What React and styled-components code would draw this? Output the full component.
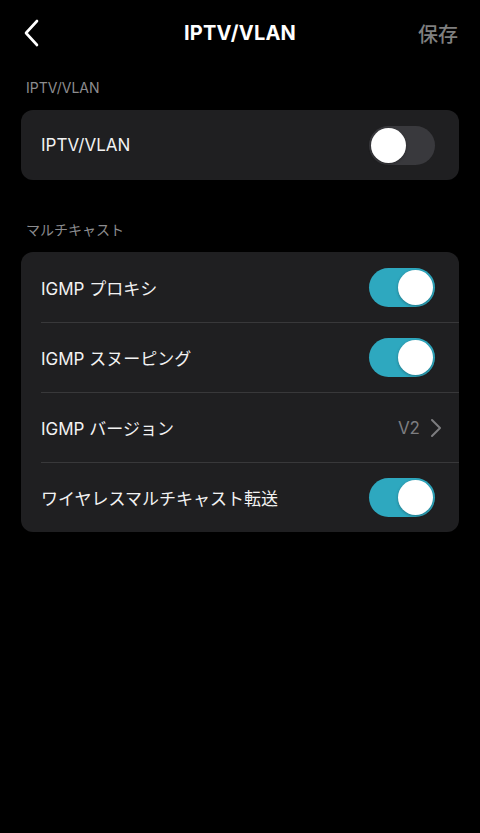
import React from "react";
import styled, { createGlobalStyle } from "styled-components";

const GlobalStyle = createGlobalStyle`
  html, body {
    margin: 0;
    padding: 0;
    background: #000;
  }
  body {
    font-family: "Inter", "Noto Sans CJK JP", sans-serif;
    color: #fff;
  }
`;

const Page = styled.div`
  width: 480px;
  min-height: 833px;
  background: #000;
  display: flex;
  flex-direction: column;
`;

const Header = styled.div`
  height: 66px;
  display: flex;
  align-items: center;
  justify-content: space-between;
  padding: 0 22px;
  position: relative;
`;

const BackButton = styled.div`
  width: 30px;
  height: 30px;
  display: flex;
  align-items: center;
`;

const Title = styled.div`
  position: absolute;
  left: 0;
  right: 0;
  text-align: center;
  font-size: 20px;
  font-weight: 700;
  letter-spacing: 0.2px;
  pointer-events: none;
`;

const Save = styled.div`
  font-size: 20px;
  font-weight: 500;
  color: #7f7f7f;
`;

const SectionLabel = styled.div`
  font-size: 14px;
  line-height: 17px;
  color: #8c8c8f;
  padding: ${(p) => p.$top}px 26px 14px;
`;

const Card = styled.div`
  margin: 0 21px;
  background: #1f1f21;
  border-radius: 12px;
  overflow: hidden;
`;

const Row = styled.div`
  height: 70px;
  box-sizing: border-box;
  display: flex;
  align-items: center;
  justify-content: space-between;
  padding-right: 24px;
  margin-left: 20px;
  border-top: ${(p) => (p.$first ? "none" : "1px solid #38383a")};
`;

const Label = styled.div`
  font-size: 17px;
  color: #f2f2f2;
`;

const Toggle = styled.div`
  width: 66px;
  height: 39px;
  border-radius: 20px;
  background: ${(p) => (p.$on ? "#2ea8bf" : "#39393d")};
  display: flex;
  align-items: center;
  justify-content: ${(p) => (p.$on ? "flex-end" : "flex-start")};
  padding: 0 2px;
  box-sizing: border-box;
`;

const Knob = styled.div`
  width: 35px;
  height: 35px;
  border-radius: 50%;
  background: #fff;
  box-shadow: 0 1px 3px rgba(0, 0, 0, 0.3);
`;

const Value = styled.div`
  display: flex;
  align-items: center;
  gap: 10px;
  font-size: 17px;
  color: #7d7d80;
  margin-right: -7px;
`;

const Switch = ({ on }) => (
  <Toggle $on={on}>
    <Knob />
  </Toggle>
);

const rows = [
  { label: "IGMP プロキシ", type: "toggle", on: true },
  { label: "IGMP スヌーピング", type: "toggle", on: true },
  { label: "IGMP バージョン", type: "value", value: "V2" },
  { label: "ワイヤレスマルチキャスト転送", type: "toggle", on: true },
];

export default function App() {
  return (
    <Page>
      <GlobalStyle />
      <Header>
        <BackButton>
          <svg width="18" height="28" viewBox="0 0 18 28">
            <path
              d="M15 2 L4 14 L15 26"
              fill="none"
              stroke="#fff"
              strokeWidth="2.6"
              strokeLinecap="round"
              strokeLinejoin="round"
            />
          </svg>
        </BackButton>
        <Title>IPTV/VLAN</Title>
        <Save>保存</Save>
      </Header>

      <SectionLabel $top={13}>IPTV/VLAN</SectionLabel>
      <Card>
        <Row $first>
          <Label>IPTV/VLAN</Label>
          <Switch on={false} />
        </Row>
      </Card>

      <SectionLabel $top={41}>マルチキャスト</SectionLabel>
      <Card>
        {rows.map((r, i) => (
          <Row key={r.label} $first={i === 0}>
            <Label>{r.label}</Label>
            {r.type === "toggle" ? (
              <Switch on={r.on} />
            ) : (
              <Value>
                {r.value}
                <svg width="12" height="20" viewBox="0 0 12 20">
                  <path
                    d="M2 2 L10 10 L2 18"
                    fill="none"
                    stroke="#7d7d80"
                    strokeWidth="2"
                    strokeLinecap="round"
                    strokeLinejoin="round"
                  />
                </svg>
              </Value>
            )}
          </Row>
        ))}
      </Card>
    </Page>
  );
}
